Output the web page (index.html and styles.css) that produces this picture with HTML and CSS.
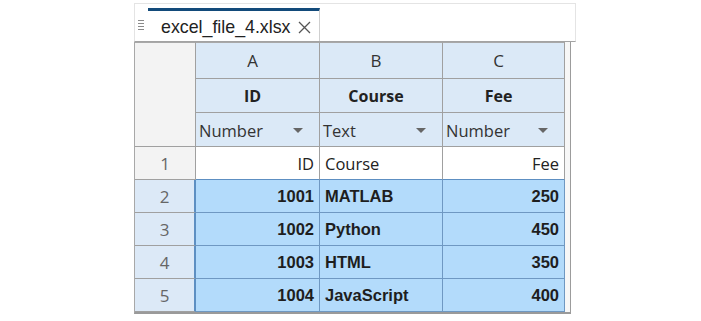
FILE: index.html
```html
<!DOCTYPE html>
<html>
<head>
<meta charset="utf-8">
<link rel="stylesheet" href="styles.css">
</head>
<body>
<div class="panel">
  <div class="tabbar">
    <div class="grip"><span></span><span></span><span></span><span></span></div>
    <div class="tab">
      <span class="tab-title">excel_file_4.xlsx</span>
      <svg class="close" width="13" height="13" viewBox="0 0 13 13"><path d="M1 1 L12 12 M12 1 L1 12" stroke="#555" stroke-width="1.3" fill="none"/></svg>
    </div>
  </div>
  <div class="sheetwrap">
    <div class="grid">
      <div class="c corner"></div>
      <div class="c hdr letter">A</div>
      <div class="c hdr letter">B</div>
      <div class="c hdr letter">C</div>

      <div class="c hdr name">ID</div>
      <div class="c hdr name">Course</div>
      <div class="c hdr name">Fee</div>

      <div class="c hdr type"><span>Number</span><i class="tri"></i></div>
      <div class="c hdr type"><span>Text</span><i class="tri"></i></div>
      <div class="c hdr type"><span>Number</span><i class="tri"></i></div>

      <div class="c rh">1</div>
      <div class="c d plain num top">ID</div>
      <div class="c d plain top">Course</div>
      <div class="c d plain num top">Fee</div>

      <div class="c rh sel">2</div>
      <div class="c d s num">1001</div>
      <div class="c d s">MATLAB</div>
      <div class="c d s num">250</div>

      <div class="c rh sel">3</div>
      <div class="c d s num">1002</div>
      <div class="c d s">Python</div>
      <div class="c d s num">450</div>

      <div class="c rh sel">4</div>
      <div class="c d s num">1003</div>
      <div class="c d s">HTML</div>
      <div class="c d s num">350</div>

      <div class="c rh sel">5</div>
      <div class="c d s num">1004</div>
      <div class="c d s">JavaScript</div>
      <div class="c d s num">400</div>
    </div>
  </div>
</div>
</body>
</html>
```
FILE: styles.css
```css
* { box-sizing: border-box; }
html, body { margin: 0; padding: 0; background: #fff; }
body { font-family: "Open Sans", "Noto Sans", sans-serif; color: #222; }

.panel {
  margin: 3px 0 0 134px;
  width: 442px;
}

.tabbar {
  height: 39px;
  border: 1px solid #e4e4e4;
  border-bottom: 1px solid #a3a3a3;
  display: flex;
  align-items: flex-start;
}

.grip {
  width: 13px;
  padding: 16px 0 0 3px;
  display: flex;
  flex-direction: column;
  gap: 1px;
}
.grip span {
  display: block;
  width: 6px;
  height: 1px;
  background: #8a8a8a;
  margin-bottom: 1px;
}

.tab {
  margin-top: 4px;
  height: 33px;
  width: 172px;
  border-top: 3px solid #124a7a;
  border-right: 1px solid #cfcfcf;
  display: flex;
  align-items: center;
  padding: 0 8px 0 13px;
  justify-content: space-between;
}
.tab-title {
  font-family: "Liberation Sans", Arial, sans-serif;
  font-size: 17.8px;
  color: #222;
  margin-top: 2px;
}
.close { margin-top: 3px; }

.sheetwrap {
  width: 437px;
  border-left: 1px solid #a8a8a8;
  border-right: 1px solid #9c9c9c;
  border-bottom: 2px solid #9a9a9a;
  background: #f7f7f7;
}

.grid {
  width: 430px;
  display: grid;
  grid-template-columns: 61px 124px 123px 122px;
  grid-template-rows: 37px 34px 34px 33px 33px 33px 33px 33px;
  background: #fff;
}

.c {
  border-right: 1px solid #a0a0a0;
  border-bottom: 1px solid #a0a0a0;
  display: flex;
  align-items: center;
  font-size: 16.5px;
  white-space: nowrap;
}

.corner {
  grid-row: 1 / 4;
  background: #f3f3f3;
  border-top: 1px solid #a8a8a8;
}

.hdr {
  background: #dbe9f7;
  justify-content: center;
}
.letter { border-top: 1px solid #a8a8a8; font-size: 17px; color: #333; padding-right: 10px; }
.name { font-weight: 700; font-size: 16px; padding: 1px 10px 0 0; }
.type {
  justify-content: space-between;
  padding: 1px 16px 0 3px;
  color: #333;
}
.tri {
  width: 0;
  height: 0;
  border-left: 5.5px solid transparent;
  border-right: 5.5px solid transparent;
  border-top: 5px solid #666;
}

.rh {
  background: #f3f3f3;
  justify-content: center;
  color: #666;
  font-size: 17px;
}
.rh.sel {
  background: #dce9f7;
  border-right: 2px solid #5d8fc2;
}

.d { padding: 0 5px; }
.num { justify-content: flex-end; }
.plain { background: #fff; font-size: 16.5px; }
.plain.top { border-bottom: 1px solid #5d8fc2; }

.s {
  background: #b3dbfb;
  font-family: "Liberation Sans", Arial, sans-serif;
  font-weight: 700;
  font-size: 16.5px;
  color: #1e1e1e;
  border-right-color: #6f98c2;
  border-bottom-color: #6f98c2;
}
```
